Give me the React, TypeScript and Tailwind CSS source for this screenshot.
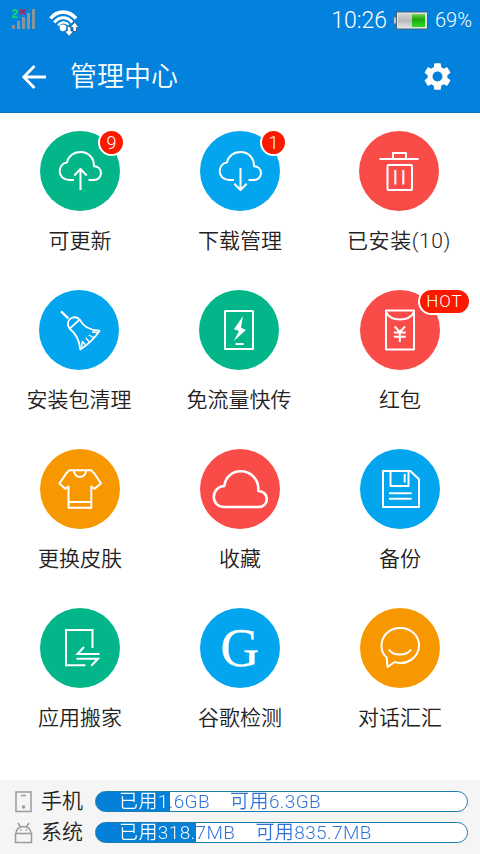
import type { ReactNode } from 'react';
import { MdSettings } from 'react-icons/md';

type Item = {
  label: string;
  color: string;
  icon: ReactNode;
  badge?: string;
  badgeClass?: string;
  shift?: string;
};

function Glyph({ children, width = 2 }: { children: ReactNode; width?: number }) {
  return (
    <svg viewBox="0 0 80 80" className="w-20 h-20" fill="none" stroke="#fff" strokeWidth={width} strokeLinejoin="round">
      {children}
    </svg>
  );
}

const cloudPath =
  'M34 49H29.5C23.5 49 19.7 45.3 19.7 40.5C19.7 35.6 22.8 32.2 27 31.6C28 25.5 33.5 21 40.5 21C48.5 21 54.2 27 54 35.2C58 35.2 61 38 61 42C61 46 58 49 54 49H48.5';

const items: Item[] = [
  {
    label: '可更新',
    color: 'bg-[#03b68a]',
    badge: '9',
    badgeClass: 'left-[58px] -top-[2px] w-[27px] h-[27px] text-[18px]',
    icon: (
      <Glyph>
        <path d={cloudPath} />
        <path d="M40.5 59V38M34.3 44.5L40.5 38L46.7 44.5" />
      </Glyph>
    ),
  },
  {
    label: '下载管理',
    color: 'bg-[#03a5ef]',
    badge: '1',
    badgeClass: 'left-[60px] -top-[2px] w-[27px] h-[27px] text-[18px]',
    icon: (
      <Glyph>
        <path d={cloudPath} />
        <path d="M40.5 37V59M34.3 52.7L40.5 59L46.7 52.7" />
      </Glyph>
    ),
  },
  {
    label: '已安装(10)',
    color: 'bg-[#f94b48]',
    shift: '-ml-[2px] tracking-[0.6px]',
    icon: (
      <Glyph>
        <path d="M20.5 28H59.5M34 28V22H47V28" />
        <rect x="28.5" y="34" width="24.5" height="25" rx="1" />
        <path d="M36.3 39V53.5M44.3 39V53.5" />
      </Glyph>
    ),
  },
  {
    label: '安装包清理',
    color: 'bg-[#03a5ef]',
    shift: '-ml-[2px]',
    icon: (
      <Glyph width={1.8}>
        <path d="M22 21.3L29.3 28.3" strokeWidth="2.4" />
        <path d="M30.7 38.7C27.5 34 29 29.5 32.5 28C35.5 26.8 39 27.5 40.7 29.7Z" />
        <path d="M30.7 38.7C37 43.5 40.5 51 41.3 59.5C48 55 56 48 60.5 40.7C52 40.5 44.5 37 40.7 29.7" />
        <path d="M42.5 57L43.5 51.5L46 54.5M46.8 48L50 51.5M49.8 45L54.5 47.5M53 42L58.5 42.5" strokeWidth="1.4" />
      </Glyph>
    ),
  },
  {
    label: '免流量快传',
    color: 'bg-[#03b68a]',
    shift: '-ml-[2px]',
    icon: (
      <Glyph>
        <rect x="26" y="21" width="28" height="38" rx="0.5" />
        <path d="M44 26L35 39.3L40 41L34.7 51L47 40L42 37.7Z" fill="#fff" stroke="none" />
        <path d="M36.5 54H44.7" />
      </Glyph>
    ),
  },
  {
    label: '红包',
    color: 'bg-[#f94b48]',
    badge: 'HOT',
    badgeClass: 'left-[58px] -top-[2px] w-[53px] h-[27px] text-[17px] tracking-[1px]',
    icon: (
      <Glyph>
        <rect x="26" y="20.5" width="28" height="39" />
        <path d="M26 22C31 32 49 32 54 22" />
        <path d="M34.7 36.5L39.8 42L45 36.5M39.8 42V52M33.8 42.5H45.8M33.8 46.7H45.8" />
      </Glyph>
    ),
  },
  {
    label: '更换皮肤',
    color: 'bg-[#f89800]',
    icon: (
      <Glyph>
        <path d="M29.5 21.2H51L54 24L61 34.5L54.6 39.8L51.3 37.5V58.7H28.5V37.5L25.3 39.8L19.4 34.5L26.5 24Z" />
        <path d="M34 21.5C34.5 30 45.5 30 46 21.5M28.5 53H51.3" />
      </Glyph>
    ),
  },
  {
    label: '收藏',
    color: 'bg-[#f94b48]',
    icon: (
      <Glyph width={2.6}>
        <path d="M24.5 58C18 58 13.8 53.5 13.8 48C13.8 42 18 37.2 24.3 37C25.5 28 32 22.3 40.5 22.3C51 22.3 59.3 30.5 58.3 42C63.3 42 66.8 45.5 66.8 50C66.8 54.5 63.5 58 59 58Z" />
      </Glyph>
    ),
  },
  {
    label: '备份',
    color: 'bg-[#03a5ef]',
    icon: (
      <Glyph>
        <path d="M23 22H50.3L59 30.3V58H23Z" />
        <path d="M30.5 22V37H48.5V22M44.7 25V33.5M29 44.3H51.7M29 49.7H51.7" />
      </Glyph>
    ),
  },
  {
    label: '应用搬家',
    color: 'bg-[#03b68a]',
    icon: (
      <Glyph>
        <g strokeLinejoin="miter">
          <path d="M52.5 40V22H26V57.3H45.5" />
          <path d="M44 39L37.5 46H59.5M36.5 50.7H58L51.3 57.7" />
        </g>
      </Glyph>
    ),
  },
  {
    label: '谷歌检测',
    color: 'bg-[#03a5ef]',
    icon: (
      <span className="block font-['Liberation_Serif',serif] text-[54px] leading-[80px] text-center text-white font-normal [-webkit-text-stroke:0.3px_white]">
        G
      </span>
    ),
  },
  {
    label: '对话汇汇',
    color: 'bg-[#f89800]',
    icon: (
      <Glyph>
        <path d="M26.7 49.5C23 46.5 21.5 42.5 21.5 38C21.5 27.5 29.5 20 40.2 20C51 20 59 27.5 59 37.5C59 49 47 58 34.7 54L27.5 59Z" />
        <path d="M29 41.5C33 48.3 46.5 48.3 51 41.5" />
      </Glyph>
    ),
  },
];

function SignalIcon() {
  return (
    <svg width="25" height="24" viewBox="0 0 25 24" className="ml-[11px] -mt-[2px]">
      <g fill="#8b9499">
        <path d="M1 18h3v4H1zM6 14h3v8H6zM11 10h3v12h-3zM16 6h3v16h-3zM21 2h3v20h-3z" />
      </g>
      <text x="0.5" y="10.5" fontSize="12" fontWeight="700" fill="#16d96a" fontFamily="Liberation Sans, sans-serif">
        2
      </text>
      <path d="M9 2.5L14 7M14 2.5L9 7" stroke="#b3264f" strokeWidth="1.8" />
    </svg>
  );
}

function WifiIcon() {
  return (
    <svg width="30" height="28" viewBox="0 0 30 28" className="ml-[13px] mt-[5px]" fill="none" stroke="#fff">
      <path d="M1.5 9.5C8 1 20 1 27 9.5" strokeWidth="3.6" />
      <path d="M5.3 13.5C10 7.3 18.5 7.3 23.2 13.5" strokeWidth="3" />
      <path d="M9 16.5C12 12.5 17 12.5 19.5 16" strokeWidth="2.2" />
      <circle cx="14" cy="18.8" r="3.4" fill="#fff" stroke="none" />
      <g fill="#fff" stroke="#17598c" strokeWidth="0.8">
        <path d="M18.3 17.5h3.6v4.5h2.8l-4.6 5.5-4.6-5.5h2.8z" />
        <path d="M24 22.5v-4h-2.8l4.5-5.5 4.2 5.5h-2.5v4z" />
      </g>
    </svg>
  );
}

function BatteryIcon() {
  return (
    <svg width="35" height="19" viewBox="0 0 35 19">
      <defs>
        <linearGradient id="gray" x1="0" y1="0" x2="0" y2="1">
          <stop offset="0" stopColor="#d4d4d4" />
          <stop offset="0.5" stopColor="#b9b9b9" />
          <stop offset="1" stopColor="#dedede" />
        </linearGradient>
        <linearGradient id="green" x1="0" y1="0" x2="0" y2="1">
          <stop offset="0" stopColor="#7bd35d" />
          <stop offset="0.4" stopColor="#18a80c" />
          <stop offset="1" stopColor="#35d827" />
        </linearGradient>
      </defs>
      <path d="M0.5 6H4V13H0.5Z" fill="#bcc3c6" stroke="#5a6d79" />
      <rect x="3.5" y="1" width="31" height="17" fill="#dfe6e6" stroke="#466477" />
      <rect x="5" y="3" width="14" height="13" fill="url(#gray)" />
      <rect x="19" y="3" width="13" height="13" fill="url(#green)" />
    </svg>
  );
}

function StorageBar({ used, free, fill }: { used: string; free: string; fill: number }) {
  return (
    <div
      className="w-[373px] h-[21px] rounded-full border border-[#1b7cae]"
      style={{ backgroundImage: `linear-gradient(to right, #0480d8 ${fill}px, #fff ${fill}px)` }}
    >
      {/* text colour flips where the fill ends */}
      <div
        className="flex gap-[20px] pl-[23px] text-[19px] leading-[19px] tracking-[0.4px] whitespace-nowrap bg-clip-text text-transparent"
        style={{ backgroundImage: `linear-gradient(to right, #fff ${fill}px, #2c70d8 ${fill}px)` }}
      >
        <span>{used}</span>
        <span>{free}</span>
      </div>
    </div>
  );
}

export default function App() {
  return (
    <div className="w-[480px] h-[854px] flex flex-col bg-white overflow-hidden font-[350] font-['Roboto','Noto_Sans_CJK_SC',sans-serif] text-[#222]">
      <header className="h-[113px] bg-[#0281dd] text-white border-b border-[#0873b8]">
        <div className="h-10 flex items-center">
          <SignalIcon />
          <WifiIcon />
          <div className="ml-auto flex items-center pr-[6px]">
            <span className="text-[23px] leading-6 pt-[2px]">10:26</span>
            <span className="ml-[6px]">
              <BatteryIcon />
            </span>
            <span className="ml-[7px] w-[39px] text-[20px] leading-6">69%</span>
          </div>
        </div>
        <div className="h-[73px] flex items-center pl-[22px] pr-[26px]">
          <svg width="25" height="24" viewBox="0 0 25 24" fill="none" stroke="#fff" strokeWidth="2.8">
            <path d="M24 12H2M12.5 1L1.8 12L12.5 23" />
          </svg>
          <h1 className="ml-[23px] pt-[2px] text-[27px] font-[350]">管理中心</h1>
          <MdSettings className="ml-auto w-[33px] h-[33px]" />
        </div>
      </header>

      <main className="flex-1 grid grid-cols-3 auto-rows-[159px] pt-[18px]">
        {items.map((item) => (
          <div key={item.label} className="flex flex-col items-center">
            <div className={item.shift}>
              <div className={`relative w-20 h-20 mx-auto rounded-full ${item.color}`}>
                {item.icon}
                {item.badge && (
                  <span className={`absolute flex items-center justify-center rounded-full border-2 border-white bg-[#fb1900] text-white ${item.badgeClass}`}>
                    {item.badge}
                  </span>
                )}
              </div>
              <p className="mt-[14px] text-[21px] leading-8 text-center whitespace-nowrap">{item.label}</p>
            </div>
          </div>
        ))}
      </main>

      <footer className="h-[74px] bg-[#f5f5f5] pt-[6px] pl-[14px] text-[21px]">
        <div className="h-[31px] flex items-center">
          <svg width="19" height="22" viewBox="0 0 19 22" fill="none" stroke="#9b9b9b" strokeWidth="1.5">
            <path d="M2 1H17V20.5H2ZM7 4.5H12" />
            <circle cx="9.5" cy="16" r="1" fill="#9b9b9b" />
          </svg>
          <span className="w-[54px] ml-[8px]">手机</span>
          <StorageBar used="已用1.6GB" free="可用6.3GB" fill={74} />
        </div>
        <div className="h-[31px] flex items-center">
          <svg width="19" height="22" viewBox="0 0 19 22" fill="none" stroke="#9b9b9b" strokeWidth="1.5">
            <path d="M1.5 11.5H17.5V20.5H1.5ZM2 11.5C2 2 17 2 17 11.5M4 1L6.5 5M15 1L12.5 5" />
            <path d="M6 8H7.5M11.5 8H13" />
          </svg>
          <span className="w-[54px] ml-[8px]">系统</span>
          <StorageBar used="已用318.7MB" free="可用835.7MB" fill={100} />
        </div>
      </footer>
    </div>
  );
}
